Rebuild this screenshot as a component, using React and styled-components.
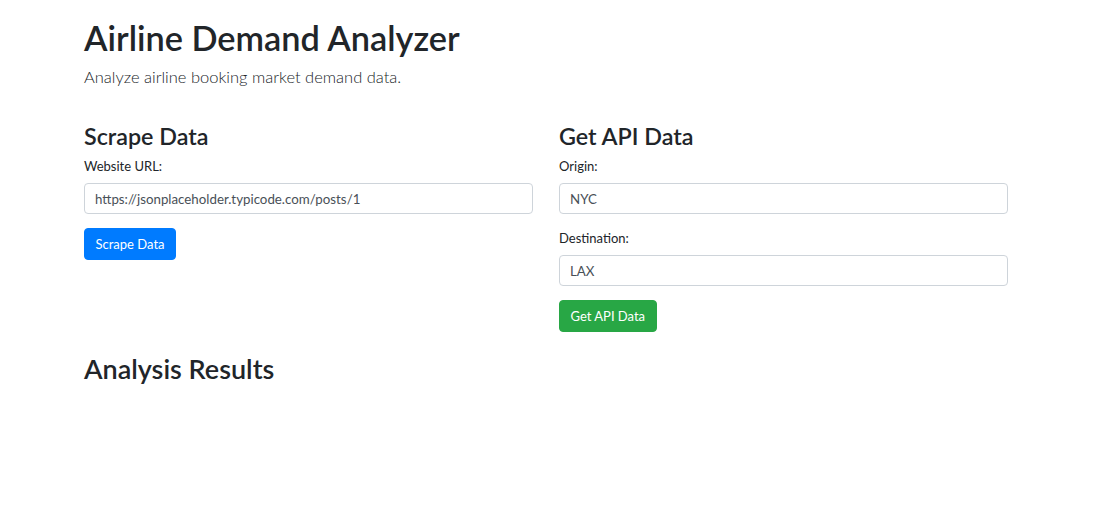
import styled, { createGlobalStyle } from "styled-components";

const GlobalStyle = createGlobalStyle`
  body {
    margin: 0;
    background: #fff;
    color: #212529;
    font-family: "Segoe UI", Lato, "Noto Sans", sans-serif;
  }
  * { box-sizing: border-box; }
`;

const Page = styled.div`
  padding: 17px 0 40px 84px;
  width: 1008px;
`;

const Title = styled.h1`
  margin: 0;
  font-size: 34.3px;
  font-weight: 600;
  line-height: 42px;
`;

const Lead = styled.p`
  margin: 6px 0 0;
  font-size: 16.5px;
  font-weight: 300;
  line-height: 24px;
`;

const Columns = styled.div`
  display: grid;
  grid-template-columns: 449px 449px;
  column-gap: 26px;
  margin-top: 34px;
`;

const Section = styled.section`
  display: flex;
  flex-direction: column;
  align-items: flex-start;
`;

const SectionTitle = styled.h2`
  margin: 0 0 6px;
  font-size: ${(props) => props.size || 23.3}px;
  font-weight: 600;
  line-height: ${(props) => props.lh || 27}px;
`;

const Field = styled.div`
  width: 100%;
  margin-bottom: 14px;
`;

const Label = styled.label`
  display: block;
  font-size: 13px;
  line-height: 20px;
  margin-bottom: 7px;
`;

const Input = styled.input`
  display: block;
  width: 100%;
  height: 31px;
  padding: 0 10px;
  border: 1px solid #ced4da;
  border-radius: 4px;
  font-family: inherit;
  font-size: 13.3px;
  color: #495057;
  background: #fff;
`;

const Button = styled.button`
  height: 32px;
  padding: 0 10.5px;
  border: 1px solid ${(props) => props.color};
  border-radius: 4px;
  background: ${(props) => props.color};
  color: #fff;
  font-family: inherit;
  font-size: 13px;
  line-height: 1;
  cursor: pointer;
`;

const Results = styled.div`
  margin-top: 20px;
`;

export default function App() {
  return (
    <>
      <GlobalStyle />
      <Page>
        <Title>Airline Demand Analyzer</Title>
        <Lead>Analyze airline booking market demand data.</Lead>
        <Columns>
          <Section>
            <SectionTitle>Scrape Data</SectionTitle>
            <Field>
              <Label>Website URL:</Label>
              <Input defaultValue="https://jsonplaceholder.typicode.com/posts/1" />
            </Field>
            <Button color="#007bff">Scrape Data</Button>
          </Section>
          <Section>
            <SectionTitle>Get API Data</SectionTitle>
            <Field>
              <Label>Origin:</Label>
              <Input defaultValue="NYC" />
            </Field>
            <Field>
              <Label>Destination:</Label>
              <Input defaultValue="LAX" />
            </Field>
            <Button color="#28a745">Get API Data</Button>
          </Section>
        </Columns>
        <Results>
          <SectionTitle size={27} lh={34}>Analysis Results</SectionTitle>
        </Results>
      </Page>
    </>
  );
}
